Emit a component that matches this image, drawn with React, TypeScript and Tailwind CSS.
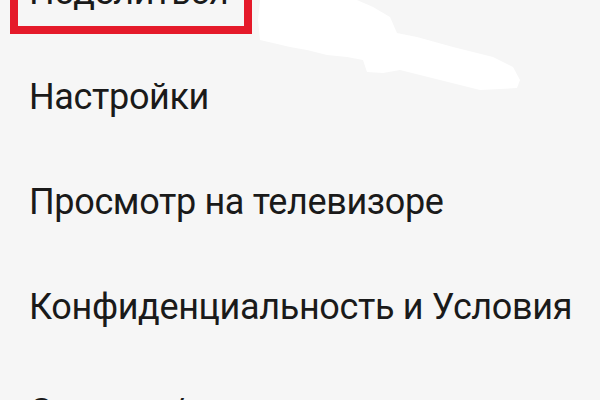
import * as React from "react";

const items = [
  "Поделиться",
  "Настройки",
  "Просмотр на телевизоре",
  "Конфиденциальность и Условия",
  "Справка/отзыв",
];

export default function App() {
  return (
    <div
      className="relative w-[600px] h-[400px] overflow-hidden bg-[#f6f6f6] text-[#1a1a1a]"
      style={{ fontFamily: "Roboto, 'Noto Sans', sans-serif" }}
    >
      <ul className="-mt-[61px] flex flex-col">
        {items.map((label, i) => (
          <li key={label} className="relative h-[105px] flex items-center pl-[29px]">
            {i === 0 && (
              <span className="absolute left-[10px] right-[348px] top-[20px] bottom-[10px] border-[8px] border-[#e51a2a]" />
            )}
            <span className="text-[36px] leading-none tracking-[-0.35px]">{label}</span>
          </li>
        ))}
      </ul>

      {/* erased watermark patch */}
      <svg className="absolute left-0 top-0" width="600" height="120" viewBox="0 0 600 120">
        <polygon
          fill="#ffffff"
          points="260,0 357,0 373,7 390,17 397,33 417,37 453,47 493,57 513,67 520,80 517,88 480,90 440,80 400,70 383,73 367,72 363,60 347,57 327,55 307,50 290,47 273,43 260,40 258,20"
        />
      </svg>
    </div>
  );
}
